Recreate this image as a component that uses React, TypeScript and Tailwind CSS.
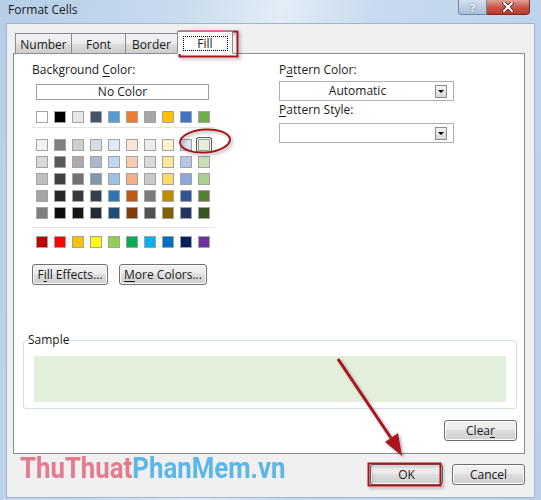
import React from "react";

const ThemeRows: string[][] = [
  ["#FFFFFF", "#000000", "#E7E6E6", "#44546A", "#5B9BD5", "#ED7D31", "#A5A5A5", "#FFC000", "#4472C4", "#70AD47"],
];

const TintRows: string[][] = [
  ["#F2F2F2", "#7F7F7F", "#D0CECE", "#D6DCE4", "#DDEBF7", "#FCE4D6", "#EDEDED", "#FFF2CC", "#D9E1F2", "#E2EFDA"],
  ["#D9D9D9", "#595959", "#AEAAAA", "#ACB9CA", "#BDD7EE", "#F8CBAD", "#DBDBDB", "#FFE699", "#B4C6E7", "#C6E0B4"],
  ["#BFBFBF", "#404040", "#757171", "#8497B0", "#9BC2E6", "#F4B084", "#C9C9C9", "#FFD966", "#8EA9DB", "#A9D08E"],
  ["#A6A6A6", "#262626", "#3A3838", "#333F4F", "#2F75B5", "#C65911", "#7B7B7B", "#BF8F00", "#305496", "#548235"],
  ["#808080", "#0D0D0D", "#161616", "#222B35", "#1F4E78", "#833C0C", "#525252", "#806000", "#203764", "#375623"],
];

const StandardRow = ["#C00000", "#FF0000", "#FFC000", "#FFFF00", "#92D050", "#00B050", "#00B0F0", "#0070C0", "#002060", "#7030A0"];

const Tabs = ["Number", "Font", "Border", "Fill"];

function Swatch({ color, selected }: { color: string; selected?: boolean }) {
  return (
    <div
      className={
        selected
          ? "size-[12px] border border-[#9a9a9a] shadow-[0_0_0_1px_#f4f4f4,0_0_0_2px_#5e5e5e] rounded-[1px]"
          : "size-[12px] border border-[#a3a3a3]"
      }
      style={{ backgroundColor: color }}
    />
  );
}

function SwatchRow({ colors, selectedIndex }: { colors: string[]; selectedIndex?: number }) {
  return (
    <div className="flex gap-[6px] ml-[4px]">
      {colors.map((c, i) => (
        <Swatch key={i} color={c} selected={i === selectedIndex} />
      ))}
    </div>
  );
}

function WinButton({ children, className = "" }: { children: React.ReactNode; className?: string }) {
  return (
    <div
      className={
        "h-[21px] flex items-center justify-center rounded-[3px] border border-[#707070] bg-[linear-gradient(#f2f2f2_0%,#ebebeb_45%,#dddddd_50%,#cfcfcf_100%)] shadow-[inset_0_0_0_1px_#fcfcfc] text-[12px] text-[#1a1a1a] " +
        className
      }
    >
      {children}
    </div>
  );
}

function Combo({ value }: { value?: string }) {
  return (
    <div className="w-[175px] h-[20px] flex items-center border border-[#abadb3] bg-white">
      <div className="flex-1 text-center text-[12px] leading-none">{value}</div>
      <div className="w-[12px] h-[13px] mr-[6px] flex items-center justify-center border border-[#8d8d8d] bg-[linear-gradient(#f4f4f4,#d6d6d6)]">
        <div className="w-0 h-0 border-l-[3px] border-r-[3px] border-t-[3px] border-l-transparent border-r-transparent border-t-black" />
      </div>
    </div>
  );
}

export default function App() {
  return (
    <div
      className="relative w-[541px] h-[500px] overflow-hidden flex flex-col bg-[linear-gradient(100deg,#b5cde6_0%,#cadcee_30%,#e2edf7_45%,#c7daee_60%,#b9d0e9_100%)] text-[#1a1a1a]"
      style={{ fontFamily: '"Open Sans", "Noto Sans", sans-serif' }}
    >
      {/* title bar */}
      <div className="h-[23px] flex items-start shrink-0">
        <div className="ml-[8px] mt-[2px] text-[12px] leading-[16px]">Format Cells</div>
        <div className="ml-auto mr-[11px] flex">
          <div className="w-[29px] h-[15px] flex items-center justify-center rounded-bl-[4px] border border-[#6f8aa8] border-t-0 bg-[linear-gradient(#d2e0ee,#aac0d8)] text-[11px] font-bold text-white leading-none [text-shadow:0_0_2px_#44546a]">
            ?
          </div>
          <div className="w-[43px] h-[15px] flex items-center justify-center rounded-br-[4px] border border-[#7a2a2a] border-t-0 border-l-0 bg-[linear-gradient(#e0a197,#c75a4c_50%,#b8382a)]">
            <svg width="12" height="10" viewBox="0 0 12 10">
              <path d="M2 1 L10 9 M10 1 L2 9" stroke="#3a1010" strokeWidth="3.4" strokeLinecap="round" />
              <path d="M2 1 L10 9 M10 1 L2 9" stroke="#ffffff" strokeWidth="2" strokeLinecap="round" />
            </svg>
          </div>
        </div>
      </div>

      {/* client area */}
      <div className="flex-1 mx-[6px] mb-[2px] border border-[#9fb5cc] bg-[#f0f0f0] flex flex-col pl-[6px] pr-[9px]">
        {/* tab strip */}
        <div className="flex items-end h-[29px] pl-[2px] relative z-10">
          {Tabs.map((t) =>
            t === "Fill" ? (
              <div
                key={t}
                className="-ml-px w-[56px] h-[23px] -mb-px pt-[2px] flex items-center justify-center bg-white border border-[#898c95] border-b-white"
              >
                <div className="w-[45px] h-[15px] flex items-center justify-center border border-dotted border-black text-[12px] leading-none">
                  {t}
                </div>
              </div>
            ) : (
              <div
                key={t}
                className={
                  "h-[20px] pt-[3px] flex items-center justify-center border border-[#898c95] border-b-0 bg-[linear-gradient(#f3f3f3,#ebebeb_50%,#dddddd_51%,#cfcfcf)] text-[12px] leading-none " +
                  (t === "Number" ? "w-[57px]" : t === "Font" ? "w-[55px] -ml-px" : "w-[53px] -ml-px")
                }
              >
                {t}
              </div>
            )
          )}
        </div>

        {/* tab panel */}
        <div className="h-[401px] border border-[#898c95] bg-white flex flex-col">
          <div className="flex pt-[8px] pl-[18px]">
            {/* left column */}
            <div className="w-[183px] flex flex-col">
              <div className="text-[12px] leading-[16px]">
                Background <u className="underline-offset-2">C</u>olor:
              </div>
              <div className="ml-[4px] mt-[6px] w-[173px] h-[16px] border border-[#a0a0a0] flex items-center justify-center text-[12px] leading-none">
                No Color
              </div>
              <div className="mt-[11px]">
                {ThemeRows.map((r, i) => (
                  <SwatchRow key={i} colors={r} />
                ))}
              </div>
              <div className="mt-[4px] h-px bg-[#e2e4e7]" />
              <div className="mt-[11px] flex flex-col gap-[5px]">
                {TintRows.map((r, i) => (
                  <SwatchRow key={i} colors={r} selectedIndex={i === 0 ? 9 : undefined} />
                ))}
              </div>
              <div className="mt-[8px] h-px bg-[#e2e4e7]" />
              <div className="mt-[8px]">
                <SwatchRow colors={StandardRow} />
              </div>
              <div className="mt-[16px] flex gap-[11px]">
                <WinButton className="w-[76px]">
                  F<u className="underline-offset-2">i</u>ll Effects...
                </WinButton>
                <WinButton className="w-[88px]">
                  <u className="underline-offset-2">M</u>ore Colors...
                </WinButton>
              </div>
            </div>

            {/* right column */}
            <div className="ml-[64px] flex flex-col">
              <div className="text-[12px] leading-[16px]">
                P<u className="underline-offset-2">a</u>ttern Color:
              </div>
              <div className="mt-[3px]">
                <Combo value="Automatic" />
              </div>
              <div className="mt-[1px] text-[12px] leading-[16px]">
                <u className="underline-offset-2">P</u>attern Style:
              </div>
              <div className="mt-[5px]">
                <Combo />
              </div>
            </div>
          </div>

          {/* sample */}
          <fieldset className="mt-[47px] ml-[9px] mr-[7px] border border-[#d5dfe5] rounded-[3px] px-[10px] pb-[6px]">
            <legend className="ml-[-6px] text-[12px] leading-[16px] pr-[1px]">Sample</legend>
            <div className="mt-[8px] h-[46px] bg-[#e2efda]" />
          </fieldset>

          <div className="mt-[11px] mr-[7px] flex justify-end">
            <WinButton className="w-[73px]">
              Clea<u className="underline-offset-2">r</u>
            </WinButton>
          </div>
        </div>

        {/* bottom row */}
        <div className="flex items-start">
          <div
            className="ml-[7px] mt-[-1px] text-[30px] leading-[30px] font-bold tracking-[0px] scale-x-[0.86] origin-left whitespace-nowrap"
            style={{ fontFamily: "Roboto, sans-serif" }}
          >
            <span className="text-[#e57a8e]">ThuThuat</span>
            <span className="text-[#5cb6e8]">PhanMem.vn</span>
          </div>
          <div className="ml-auto mt-[10px] flex gap-[9px]">
            <WinButton className="w-[73px]">OK</WinButton>
            <WinButton className="w-[73px]">Cancel</WinButton>
          </div>
        </div>
      </div>

      {/* annotations */}
      <svg className="absolute left-0 top-0 pointer-events-none" width="541" height="500">
        <defs>
          <filter id="sh" x="-20%" y="-20%" width="140%" height="140%">
            <feDropShadow dx="2" dy="2" stdDeviation="1.5" floodColor="#000" floodOpacity="0.3" />
          </filter>
        </defs>
        <g filter="url(#sh)" fill="none" stroke="#a8181f">
          <rect x="179.5" y="31.5" width="58" height="25" strokeWidth="2" />
          <rect x="368.5" y="463.5" width="72" height="22" strokeWidth="2" />
          <ellipse cx="205" cy="141" rx="25" ry="11.5" strokeWidth="2" transform="rotate(-4 205 141)" />
          <line x1="338" y1="359" x2="393" y2="441" strokeWidth="3" />
          <polygon points="402,456 385,442 398,433" fill="#a8181f" stroke="none" />
        </g>
      </svg>
    </div>
  );
}
